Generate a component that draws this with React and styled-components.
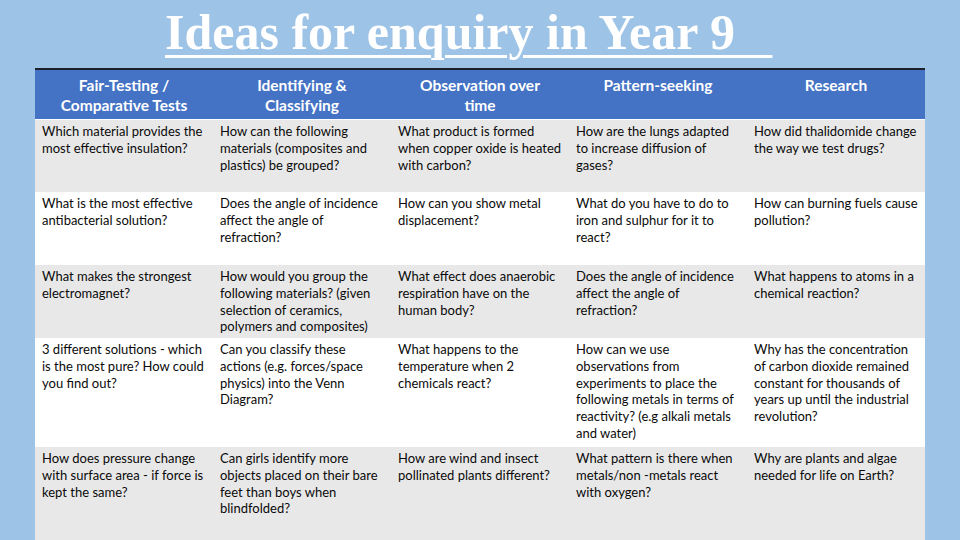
import React from "react";
import styled, { createGlobalStyle } from "styled-components";

const GlobalStyle = createGlobalStyle`
  html, body {
    margin: 0;
    padding: 0;
    background: #9dc3e6;
    overflow: hidden;
  }
`;

const Page = styled.div`
  width: 960px;
  height: 540px;
  overflow: hidden;
  background: #9dc3e6;
`;

const TitleBar = styled.div`
  height: 68px;
  box-sizing: border-box;
  padding: 7px 0 0 165px;
`;

const Title = styled.h1`
  margin: 0;
  font-family: "Liberation Serif", "Times New Roman", serif;
  font-weight: 700;
  font-size: 50px;
  line-height: 50px;
  color: #ffffff;
  white-space: pre;
  text-decoration: underline;
  text-decoration-thickness: 3px;
  text-underline-offset: 6px;
`;

const Table = styled.div`
  margin-left: 35px;
  width: 890px;
  border-top: 2px solid #1b1f2a;
`;

const Row = styled.div`
  display: grid;
  grid-template-columns: repeat(5, 178px);
  height: ${(p) => p.$h}px;
  background: ${(p) => p.$bg};
`;

const HeaderRow = styled(Row)`
  border-bottom: 1px solid #ffffff;
`;

const HeadCell = styled.div`
  padding: 5px 6px 0;
  text-align: center;
  font-family: "Lato", "Liberation Sans", sans-serif;
  font-weight: 700;
  font-size: 15.5px;
  line-height: 20px;
  color: #ffffff;
  white-space: pre;
`;

const Cell = styled.div`
  padding: 3px 7px 0;
  font-family: "Lato", "Liberation Sans", sans-serif;
  font-size: 13px;
  line-height: 16.8px;
  color: #0a0a0a;
  white-space: nowrap;
`;

const headers = [
  "Fair-Testing /\nComparative Tests",
  "Identifying &\nClassifying",
  "Observation over\ntime",
  "Pattern-seeking",
  "Research",
];

const rows = [
  {
    h: 72,
    bg: "#e8e8e8",
    cells: [
      ["Which material provides the", "most effective insulation?"],
      ["How can the following", "materials (composites and", "plastics) be grouped?"],
      ["What product is formed", "when copper oxide is heated", "with carbon?"],
      ["How are the lungs adapted", "to increase diffusion of", "gases?"],
      ["How did thalidomide change", "the way we test drugs?"],
    ],
  },
  {
    h: 73,
    bg: "#ffffff",
    cells: [
      ["What is the most effective", "antibacterial solution?"],
      ["Does the angle of incidence", "affect the angle of", "refraction?"],
      ["How can you show metal", "displacement?"],
      ["What do you have to do to", "iron and sulphur for it to", "react?"],
      ["How can burning fuels cause", "pollution?"],
    ],
  },
  {
    h: 73,
    bg: "#e8e8e8",
    cells: [
      ["What makes the strongest", "electromagnet?"],
      ["How would you group the", "following materials? (given", "selection of ceramics,", "polymers and composites)"],
      ["What effect does anaerobic", "respiration have on the", "human body?"],
      ["Does the angle of incidence", "affect the angle of", "refraction?"],
      ["What happens to atoms in a", "chemical reaction?"],
    ],
  },
  {
    h: 109,
    bg: "#ffffff",
    cells: [
      ["3 different solutions - which", "is the most pure? How could", "you find out?"],
      ["Can you classify these", "actions (e.g. forces/space", "physics) into the Venn", "Diagram?"],
      ["What happens to the", "temperature when 2", "chemicals react?"],
      ["How can we use", "observations from", "experiments to place the", "following metals in terms of", "reactivity? (e.g alkali metals", "and water)"],
      ["Why has the concentration", "of carbon dioxide remained", "constant for thousands of", "years up until the industrial", "revolution?"],
    ],
  },
  {
    h: 110,
    bg: "#e8e8e8",
    cells: [
      ["How does pressure change", "with surface area - if force is", "kept the same?"],
      ["Can girls identify more", "objects placed on their bare", "feet than boys when", "blindfolded?"],
      ["How are wind and insect", "pollinated plants different?"],
      ["What pattern is there when", "metals/non -metals react", "with oxygen?"],
      ["Why are plants and algae", "needed for life on Earth?"],
    ],
  },
];

function Lines({ lines }) {
  return lines.map((line, i) => (
    <React.Fragment key={i}>
      {i > 0 && <br />}
      {line}
    </React.Fragment>
  ));
}

export default function App() {
  return (
    <Page>
      <GlobalStyle />
      <TitleBar>
        <Title>{"Ideas for enquiry in Year 9   "}</Title>
      </TitleBar>
      <Table>
        <HeaderRow $h={49} $bg="#4472c4">
          {headers.map((h) => (
            <HeadCell key={h}>{h}</HeadCell>
          ))}
        </HeaderRow>
        {rows.map((row, r) => (
          <Row key={r} $h={row.h} $bg={row.bg}>
            {row.cells.map((lines, c) => (
              <Cell key={c}>
                <Lines lines={lines} />
              </Cell>
            ))}
          </Row>
        ))}
      </Table>
    </Page>
  );
}
